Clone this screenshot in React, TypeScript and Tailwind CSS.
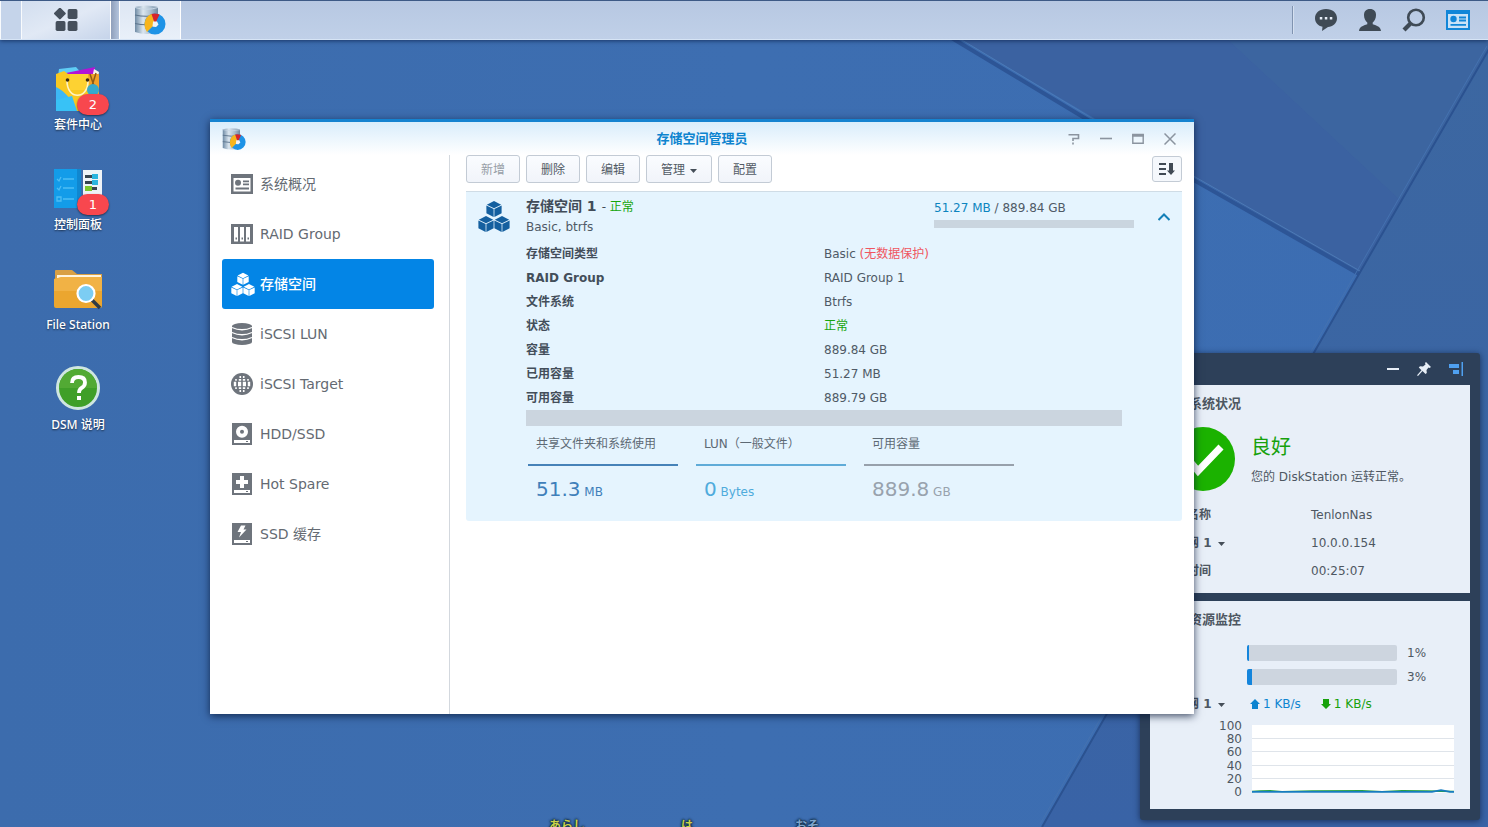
import type { ReactNode } from "react";

const FONT = "font-['DejaVu_Sans','Noto_Sans_CJK_SC',sans-serif]";

function Wallpaper() {
  return (
    <svg className="absolute inset-0 h-full w-full" viewBox="0 0 1488 827" preserveAspectRatio="xMaxYMin slice" aria-hidden="true">
      <defs>
        <linearGradient id="sky" x1="0" y1="0" x2="1" y2="0">
          <stop offset="0" stopColor="#3c6cad" />
          <stop offset="0.5" stopColor="#3d6eb1" />
          <stop offset="1" stopColor="#3c6db2" />
        </linearGradient>
        <linearGradient id="skyShade" x1="0" y1="0" x2="0" y2="1">
          <stop offset="0" stopColor="#3c67a1" />
          <stop offset="1" stopColor="#3963a6" />
        </linearGradient>
      </defs>
      <rect width="1488" height="827" fill="url(#sky)" />
      <path d="M885 -5 L1359 274 L1488 50 V-5 Z" fill="#3b62a1" />
      <path d="M1180 -5 L1490 -5 V50 L1400 200 Z" fill="#3d679f" opacity="0.7" />
      <path d="M1488 50 L1359 274 L1042 827 H1488 Z" fill="url(#skyShade)" />
      <path d="M885 -3 L955 40 L1088 120 L1359 274" fill="none" stroke="#2d5596" strokeWidth="4" />
      <path d="M887 -6 L957 37 L1090 117 L1360 271" fill="none" stroke="#4c7ab6" strokeWidth="1" />
      <path d="M1489 49 L1359 274 L1042 827" fill="none" stroke="#2b5290" strokeWidth="2" />
      <path d="M1487 46 L1357 271 L1040 824" fill="none" stroke="#4572b0" strokeWidth="1" />
    </svg>
  );
}

function StorageLogo({ className }: { className: string }) {
  return (
    <svg className={className} viewBox="0 0 32 32" aria-hidden="true">
      <defs>
        <linearGradient id="steel" x1="0" x2="1">
          <stop offset="0" stopColor="#6f8ba5" />
          <stop offset="0.35" stopColor="#dbe6ef" />
          <stop offset="0.7" stopColor="#a9bccd" />
          <stop offset="1" stopColor="#6f879e" />
        </linearGradient>
      </defs>
      <path d="M1 3 Q12.5 0 24 3 V28 Q12.5 32 1 28 Z" fill="url(#steel)" />
      <path d="M1 3.5 Q12.5 7 24 3.5" fill="none" stroke="#c9d8e6" />
      <path d="M1 11 Q12.5 13.5 24 11 M1 19.5 Q12.5 22 24 19.5" fill="none" stroke="#5c748c" strokeWidth="1.2" />
      <circle cx="21" cy="20" r="6.8" fill="none" stroke="#1e93e6" strokeWidth="7.4" />
      <path d="M21 20 L13 28 Q9 22 11.500 15.500 Q14 10.500 18 10 Z" fill="#f8b51c" />
      <path d="M21 20 L17.500 10 Q21 9 25.500 10.500 Z" fill="#d8232a" />
      <path d="M19 17.500 L23 17.500 L24.500 20.500 L22 23 L18.500 22.500 Z" fill="#eef3f8" />
    </svg>
  );
}

function Cube({ x, y }: { x: number; y: number }) {
  return (
    <g transform={`translate(${x} ${y})`}>
      <path d="M0 -7.9 L7.2 -4.3 L0 -0.8 L-7.2 -4.3 Z" />
      <path d="M-7.6 -3.5 L-0.4 0 V7.9 L-7.6 4.3 Z" />
      <path d="M7.6 -3.5 L0.4 0 V7.9 L7.6 4.3 Z" />
    </g>
  );
}

function Cubes({ className }: { className: string }) {
  return (
    <svg className={className} viewBox="0 0 32 32" fill="currentColor" aria-hidden="true">
      <Cube x={16} y={9} />
      <Cube x={8} y={24} />
      <Cube x={24} y={24} />
    </svg>
  );
}

function CardIcon({ className }: { className: string }) {
  return (
    <svg className={className} viewBox="0 0 22 22" aria-hidden="true">
      <path fill="currentColor" fillRule="evenodd" d="M0 1 H22 V21 H0 Z M2.5 5 V18.5 H19.5 V5 Z" />
      <circle cx="7" cy="9.8" r="3" fill="currentColor" />
      <path d="M12 8.300 H18 M12 11.300 H18 M4.500 15.500 H18" stroke="currentColor" strokeWidth="1.8" />
    </svg>
  );
}

function DiskShell({ children }: { children: ReactNode }) {
  return (
    <svg className="size-[22px] shrink-0" viewBox="0 0 22 22" aria-hidden="true">
      <path d="M1 0 H21 V22 H1 Z" fill="currentColor" />
      <path d="M3 17 H19 V20 H3 Z" fill="#fff" />
      <path d="M15 18 H17 V19 H15 Z" fill="currentColor" />
      {children}
    </svg>
  );
}

const navItems: { label: string; icon: ReactNode; active?: boolean }[] = [
  { label: "系统概况", icon: <CardIcon className="size-[22px] shrink-0" /> },
  {
    label: "RAID Group",
    icon: (
      <svg className="size-[22px] shrink-0" viewBox="0 0 22 22" aria-hidden="true">
        <path fill="currentColor" d="M0 1 H22 V21 H0 Z" />
        <path fill="#fff" d="M3 4 H7 V18.5 H3 Z M9 4 H13 V18.5 H9 Z M15 4 H19 V18.5 H15 Z" />
        <path fill="currentColor" d="M4.5 14.5 H6 V16.5 H4.5 Z M10.5 14.5 H12 V16.5 H10.5 Z M16.5 14.5 H18 V16.5 H16.5 Z" />
      </svg>
    ),
  },
  { label: "存储空间", icon: <Cubes className="-mr-0.5 size-6 shrink-0" />, active: true },
  {
    label: "iSCSI LUN",
    icon: (
      <svg className="size-[22px] shrink-0" viewBox="0 0 22 22" aria-hidden="true">
        <path fill="currentColor" d="M1 3 A10 3 0 0 1 21 3 V19 A10 3 0 0 1 1 19 Z" />
        <path fill="none" stroke="#fff" strokeWidth="1.3" d="M1 4.5 Q11 9 21 4.5 M1 9.5 Q11 14 21 9.5 M1 14.5 Q11 19 21 14.5" />
      </svg>
    ),
  },
  {
    label: "iSCSI Target",
    icon: (
      <svg className="size-[22px] shrink-0" viewBox="0 0 22 22" aria-hidden="true">
        <circle cx="11" cy="11" r="11" fill="currentColor" />
        <g fill="none" stroke="#fff">
          <path d="M2.8 11 H5.2 M7 11 H10.2 M11.800 11 H15 M16.800 11 H19.2" strokeWidth="4.4" />
          <path d="M4.200 6.800 H5.800 M7.800 6.800 H10.200 M11.800 6.800 H14.200 M16.200 6.800 H17.800 M4.200 15.200 H5.800 M7.800 15.200 H10.200 M11.800 15.200 H14.200 M16.200 15.200 H17.800" strokeWidth="1.8" />
          <path d="M9.300 3 V5 M12.700 3 V5 M9.300 17 V19 M12.700 17 V19" strokeWidth="1.6" />
        </g>
      </svg>
    ),
  },
  {
    label: "HDD/SSD",
    icon: (
      <DiskShell>
        <circle cx="11" cy="8.800" r="4" fill="none" stroke="#fff" strokeWidth="4" />
      </DiskShell>
    ),
  },
  {
    label: "Hot Spare",
    icon: (
      <DiskShell>
        <path d="M9 3 H13 V7 H17 V11 H13 V15 H9 V11 H5 V7 H9 Z" fill="#fff" />
      </DiskShell>
    ),
  },
  {
    label: "SSD 缓存",
    icon: (
      <DiskShell>
        <path d="M10 2.500 H14.500 L12.500 6.500 H15.500 L8 14.500 L10 9 H6.500 Z" fill="#fff" />
      </DiskShell>
    ),
  },
];

const details: { name: string; value: ReactNode }[] = [
  { name: "存储空间类型", value: <>Basic <span className="text-[#f05560]">(无数据保护)</span></> },
  { name: "RAID Group", value: "RAID Group 1" },
  { name: "文件系统", value: "Btrfs" },
  { name: "状态", value: <span className="text-[#17a50c]">正常</span> },
  { name: "容量", value: "889.84 GB" },
  { name: "已用容量", value: "51.27 MB" },
  { name: "可用容量", value: "889.79 GB" },
];

const usage = [
  { name: "共享文件夹和系统使用", amount: "51.3", unit: "MB", line: "border-[#4682b8]", text: "text-[#3f7fba]" },
  { name: "LUN（一般文件）", amount: "0", unit: "Bytes", line: "border-[#5fabd8]", text: "text-[#4fabdc]" },
  { name: "可用容量", amount: "889.8", unit: "GB", line: "border-[#97a0ab]", text: "text-[#98a2ad]" },
];

function Caret() {
  return (
    <svg className="mt-0.5 h-[4px] w-[7px]" viewBox="0 0 7 4" aria-hidden="true">
      <path d="M0 0 H7 L3.500 4 Z" fill="#454e58" />
    </svg>
  );
}

function ToolButton({ children, muted }: { children: ReactNode; muted?: boolean }) {
  return (
    <button
      type="button"
      disabled={muted}
      className="flex h-7 items-center gap-[5px] rounded-[3px] border border-[#c3cbd5] bg-linear-to-b from-[#fafcff] to-[#f1f4fa] px-3.5 pt-0.5 text-xs text-[#525b65] disabled:text-[#979ea7]"
    >
      {children}
    </button>
  );
}

function DesktopItem({ label, badge, children }: { label: string; badge?: string; children: ReactNode }) {
  return (
    <button type="button" className="relative flex w-24 flex-col items-center gap-[5px]">
      <svg className="size-12" viewBox="0 0 48 48" aria-hidden="true">
        {children}
      </svg>
      {badge && (
        <span className="absolute top-[30px] right-[17px] flex h-[21px] w-8 items-center justify-center rounded-full bg-[#f8474e] text-[13px] text-white shadow-[0_1px_2px_rgba(0,0,0,0.5)]">
          {badge}
        </span>
      )}
      <span className="font-['Noto_Sans','Noto_Sans_CJK_SC',sans-serif] text-xs leading-4 font-medium whitespace-nowrap text-white [text-shadow:0_1px_2px_rgba(0,0,0,0.6)]">
        {label}
      </span>
    </button>
  );
}

function Desktop() {
  return (
    <nav aria-label="桌面" className="relative flex w-fit flex-col gap-[31px] pt-6 pl-[30px]">
      <DesktopItem label="套件中心" badge="2">
        <path d="M5 5 L22 3 L30 12 H4 Z" fill="#5fcdf5" />
        <path d="M12 9 L41 3 L39 13 H12 Z" fill="#b314d6" />
        <path d="M40 5 L45 8 L44 14 H38 Z" fill="#f6f4ea" />
        <path d="M2 10 L10 7 L14 10 H45 V47 H2 Z" fill="#f9c921" />
        <path d="M16 10 H34 V26 H16 Z" fill="#ffd93d" opacity="0.6" />
        <path d="M34 10 H45 V47 H38 Z" fill="#f1a22a" />
        <path d="M2 23 C12 28 18 36 22 47 H2 Z" fill="#3db8f5" />
        <path d="M2 36 L18 32 L23 47 H2 Z" fill="#38c2f6" />
        <path d="M13 17 C13 36 34 36 34 17" fill="none" stroke="#fff3c4" strokeWidth="1.600" />
        <circle cx="13.500" cy="16" r="1.800" fill="#3b2b12" />
        <circle cx="33.500" cy="16" r="1.800" fill="#3b2b12" />
        <path d="M36 10 L40 22 M42 9 L38 22" stroke="#8d5c16" strokeWidth="1.500" />
        <circle cx="39" cy="26" r="6" fill="#35aacd" />
      </DesktopItem>
      <DesktopItem label="控制面板" badge="1">
        <path d="M29 6 H48 V46 H29 Z" fill="#eef3f7" />
        <path d="M0 5 H27 V44 H0 Z" fill="#139ce9" />
        <path d="M23 5 H27 V44 H23 Z" fill="#1087d0" />
        <g stroke="#4fbdf3" strokeWidth="1.300" fill="none">
          <path d="M3 15 L5 17 L7 13 M9 15 H20 M3 24 L5 26 L7 22 M9 24 H20 M9 35 H20" />
          <path d="M3 33 H7 V37 H3 Z" />
        </g>
        <path d="M31 11 H43 V14 H31 Z M31 17 H43 V20 H31 Z M31 23 H43 V26 H31 Z" fill="#36444f" />
        <path d="M38 10 H44 V15 H38 Z M38 16 H44 V21 H38 Z" fill="#2bb5df" />
        <path d="M31 22 H38 V27 H31 Z" fill="#7bc62d" />
      </DesktopItem>
      <DesktopItem label="File Station">
        <path d="M1 7 Q1 6 2 6 H18 L23 10 H48 V18 H1 Z" fill="#d9a044" />
        <path d="M3 11 H47 V18 H3 Z" fill="#fff5df" />
        <path d="M0 15 L8 13 H48 V42 Q48 44 46 44 H2 Q0 44 0 42 Z" fill="#eba62f" />
        <path d="M0 15 L8 13 H48 V27 H0 Z" fill="#f1b245" />
        <path d="M38 36 L46 44" stroke="#2f3b46" strokeWidth="3.500" />
        <circle cx="32" cy="29.500" r="8.500" fill="#7ccdf3" stroke="#fff" strokeWidth="2.200" />
      </DesktopItem>
      <DesktopItem label="DSM 说明">
        <circle cx="24" cy="24" r="20.500" fill="#3f9f28" stroke="#cfe6e0" strokeWidth="3" />
        <path d="M5 24 A19 19 0 0 1 43 24 Z" fill="#52aa34" />
        <path d="M18 19 Q18 13 24.500 13 Q31 13 31 18.500 Q31 22 27.500 24 Q25 25.500 25 29" fill="none" stroke="#fff" strokeWidth="3.800" />
        <path d="M23 32 H27 V36 H23 Z" fill="#fff" />
      </DesktopItem>
    </nav>
  );
}

function Taskbar() {
  return (
    <header className="relative flex h-10 items-stretch justify-between border-t border-b border-t-[#3d5a86] border-b-[#d6e4f5] bg-linear-to-b from-[#b7c8e2] to-[#c0d0e8] shadow-[0_1px_4px_rgba(10,30,70,0.7)]">
      <div className="flex">
        <span className="w-[22px] border-r border-l border-white/90 bg-[#c5d4ea]" />
        <button type="button" aria-label="主菜单" className="flex w-[89px] items-center justify-center border-r border-white bg-linear-to-br from-[#d2deef] via-[#e1e9f5] to-[#c6d4ea] text-[#454f5b]">
          <svg className="size-6" viewBox="0 0 22 22" fill="currentColor" aria-hidden="true">
            <rect x="1.300" y="1" width="8.200" height="8.200" rx="1" transform="rotate(45 5.400 5.100)" />
            <rect x="12.500" y="1" width="9" height="9" rx="1.500" />
            <rect x="1.500" y="12" width="9" height="9" rx="1.500" />
            <rect x="12.500" y="12" width="9" height="9" rx="1.500" />
          </svg>
        </button>
        <span className="w-2 bg-linear-to-r from-[#8f9fba] to-[#b3c4dd]" />
        <button type="button" aria-label="存储空间管理员" className="flex w-[62px] items-center justify-center border border-y-0 border-white bg-linear-to-b from-[#dde6f3] to-[#e9f0f9]">
          <StorageLogo className="size-8" />
        </button>
      </div>
      <div className="flex items-center gap-5 pr-[18px] text-[#3f4a55]">
        <span className="h-7 w-0.5 border-r border-l border-l-[#8093b0] border-r-[#d5e0f0]" />
        <button type="button" aria-label="通知">
          <svg className="size-6" viewBox="0 0 24 24" aria-hidden="true">
            <path d="M12 1 C18.500 1 23 4.800 23 10.200 C23 15.500 18.500 18.500 14 19 L8 23 L8.500 18.800 C4 17.800 1 14.500 1 10.200 C1 4.800 5.500 1 12 1 Z" fill="currentColor" />
            <path d="M5.800 9 H8.300 V11.500 H5.800 Z M10.800 9 H13.300 V11.500 H10.800 Z M15.800 9 H18.300 V11.500 H15.800 Z" fill="#e8eef8" />
          </svg>
        </button>
        <button type="button" aria-label="用户">
          <svg className="size-6" viewBox="0 0 24 24" fill="currentColor" aria-hidden="true">
            <path d="M12 1 C16 1 18 3.500 18 7 C18 10.500 16.500 13 14.700 14.500 V16.300 C19 18 22.500 18.300 23 23 H1 C1.500 18.300 5 18 9.300 16.300 V14.500 C7.500 13 6 10.500 6 7 C6 3.500 8 1 12 1 Z" />
          </svg>
        </button>
        <button type="button" aria-label="搜索">
          <svg className="size-6" viewBox="0 0 24 24" fill="none" stroke="currentColor" aria-hidden="true">
            <circle cx="14" cy="9.500" r="7.800" strokeWidth="2.600" />
            <path d="M8.500 15.500 L2 22" strokeWidth="4.200" />
          </svg>
        </button>
        <button type="button" aria-label="小工具" className="text-[#1186d8]">
          <svg className="size-6" viewBox="0 0 24 24" aria-hidden="true">
            <path d="M0 2 H24 V22 H0 Z" fill="currentColor" />
            <path d="M2 6 H22 V20 H2 Z" fill="#c9e2f7" />
            <circle cx="7.500" cy="11" r="3.200" fill="currentColor" />
            <path d="M13 9.500 H20 M13 12.500 H20 M4.500 16.800 H20" stroke="currentColor" strokeWidth="1.800" />
          </svg>
        </button>
      </div>
    </header>
  );
}

function StorageWindow() {
  return (
    <section aria-label="存储空间管理员" className="absolute top-[119px] left-[210px] flex h-[595px] w-[984px] flex-col border-t-[3px] border-[#1583d0] bg-white shadow-[0_2px_8px_rgba(5,20,50,0.75)]">
      <header className="flex h-[33px] shrink-0 items-center justify-between bg-linear-to-b from-[#d9edfb] to-white px-3">
        <div className="flex-1">
          <StorageLogo className="size-6" />
        </div>
        <h1 className="text-[13px] leading-5 font-bold text-[#0d84cf]">存储空间管理员</h1>
        <div className="flex flex-1 justify-end">
          <div className="flex gap-5 pr-1.5 text-[#8b949f]">
            <button type="button" aria-label="帮助">
              <svg className="size-3" viewBox="0 0 12 12" fill="none" stroke="currentColor" strokeWidth="1.600" aria-hidden="true">
                <path d="M0.500 1.800 H10.500 V5.500 H5 V8 M5 9.500 V11.500" />
              </svg>
            </button>
            <button type="button" aria-label="最小化">
              <svg className="size-3" viewBox="0 0 12 12" stroke="currentColor" strokeWidth="1.600" aria-hidden="true">
                <path d="M0 5.500 H12" />
              </svg>
            </button>
            <button type="button" aria-label="最大化">
              <svg className="size-3" viewBox="0 0 12 12" fill="none" stroke="currentColor" aria-hidden="true">
                <path d="M0.800 1.500 H11.200 V10.300 H0.800 Z" strokeWidth="1.400" />
                <path d="M0 2.500 H12" strokeWidth="2.500" />
              </svg>
            </button>
            <button type="button" aria-label="关闭">
              <svg className="size-3" viewBox="0 0 12 12" stroke="currentColor" strokeWidth="1.500" aria-hidden="true">
                <path d="M0.500 0.500 L11.500 11.500 M11.500 0.500 L0.500 11.500" />
              </svg>
            </button>
          </div>
        </div>
      </header>
      <div className="flex min-h-0 flex-1">
        <nav aria-label="功能" className="w-60 shrink-0 border-r border-[#d3d8de] pt-1 pr-[15px] pl-3">
          <ul>
            {navItems.map((item) => (
              <li key={item.label}>
                <a
                  href="#"
                  className={
                    item.active
                      ? "flex h-[50px] items-center gap-[7px] rounded-[3px] bg-[#0385e6] pl-[9px] text-sm font-medium text-white"
                      : "flex h-[50px] items-center gap-[7px] rounded-[3px] pl-[9px] text-sm text-[#6e747c]"
                  }
                >
                  {item.icon}
                  <span className={item.active ? "" : "text-[#646a72]"}>{item.label}</span>
                </a>
              </li>
            ))}
          </ul>
        </nav>
        <main className="flex min-w-0 flex-1 flex-col pr-3 pl-4">
          <div className="flex items-center justify-between">
            <div className="flex gap-1.5">
              <ToolButton muted>新增</ToolButton>
              <ToolButton>删除</ToolButton>
              <ToolButton>编辑</ToolButton>
              <ToolButton>
                管理 <Caret />
              </ToolButton>
              <ToolButton>配置</ToolButton>
            </div>
            <button type="button" aria-label="排序" className="flex h-[26px] w-[30px] items-center justify-center rounded-[3px] border border-[#c3cbd5] bg-[#f5f8fc] text-[#414a54]">
              <svg className="h-3 w-4" viewBox="0 0 16 12" aria-hidden="true">
                <path d="M0 1 H7 M0 6 H7 M0 11 H7" stroke="currentColor" strokeWidth="1.800" />
                <path d="M10 0 H14 V7.500 H16 L12 12 L8 7.500 H10 Z" fill="currentColor" />
              </svg>
            </button>
          </div>
          <article className="mt-2 h-[330px] rounded-b-[3px] border-t border-[#cfdce6] bg-[#e5f4fe] text-xs text-[#4f5a66]">
            <header className="flex h-[50px] pl-3">
              <Cubes className="mt-2 size-8 text-[#145f9f]" />
              <div className="min-w-0 flex-1 pt-[3px] pl-4">
                <h2 className="flex items-baseline text-sm leading-[22px] font-bold text-[#414c58]">
                  存储空间 1<span className="ml-[5px] text-xs font-normal">- <span className="text-[#17a50c]">正常</span></span>
                </h2>
                <p className="leading-[21px]">Basic, btrfs</p>
              </div>
              <div className="w-[200px] pt-1.5">
                <p className="leading-5">
                  <span className="text-[#0d84bf]">51.27 MB</span> / 889.84 GB
                </p>
                <div className="mt-0.5 h-2 bg-[#cad5df]" />
              </div>
              <button type="button" aria-label="收起" className="flex w-12 items-center justify-center pl-3 text-[#1480b8]">
                <svg className="h-2 w-3" viewBox="0 0 12 8" fill="none" stroke="currentColor" strokeWidth="2" aria-hidden="true">
                  <path d="M0.500 7 L6 1.500 L11.500 7" />
                </svg>
              </button>
            </header>
            <div className="px-[60px]">
              <table className="w-full table-fixed text-left">
                <tbody>
                  {details.map((row) => (
                    <tr key={row.name} className="h-6">
                      <th scope="row" className="p-0 leading-6 font-bold text-[#434e5a]">{row.name}</th>
                      <td className="p-0 leading-6">{row.value}</td>
                    </tr>
                  ))}
                </tbody>
              </table>
              <div className="h-4 bg-[#cbd5df]" />
              <ul className="flex gap-[18px] pl-0.5">
                {usage.map((u) => (
                  <li key={u.amount} className="w-[150px]">
                    <p className={`${u.line} h-10 border-b-2 pl-2 leading-9 whitespace-nowrap text-[#5d6974]`}>{u.name}</p>
                    <p className={`${u.text} pl-2 leading-[46px]`}>
                      <span className="text-xl leading-[46px]">{u.amount}</span> {u.unit}
                    </p>
                  </li>
                ))}
              </ul>
            </div>
          </article>
        </main>
      </div>
    </section>
  );
}

function Meter({ label, value }: { label: string; value: number }) {
  return (
    <div className="flex h-6 items-center">
      <span className="w-[84px] font-bold">{label}</span>
      <div className="h-4 w-[150px] overflow-hidden rounded-[2px] bg-[#cdd5df]" role="meter" aria-label={label} aria-valuenow={value}>
        <div className="h-full bg-[#1485dc]" style={{ width: `${value + 0.5}%` }} />
      </div>
      <span className="pl-2.5">{value}%</span>
    </div>
  );
}

function Rate({ up }: { up?: boolean }) {
  return (
    <span className={up ? "flex items-center gap-[3px] text-[#0d84d0]" : "flex items-center gap-[3px] text-[#17a10c]"}>
      <svg className="size-2.5" viewBox="0 0 10 10" fill="currentColor" aria-hidden="true">
        {up ? <path d="M5 0 L10 5 H8 V10 H2 V5 H0 Z" /> : <path d="M5 10 L10 5 H8 V0 H2 V5 H0 Z" />}
      </svg>
      1 KB/s
    </span>
  );
}

function Widgets() {
  return (
    <aside className="absolute right-2 bottom-[7px] w-[340px] rounded-[3px] bg-[#2d4059] px-2.5 pb-[11px] text-xs text-[#4e5762] shadow-[0_1px_6px_rgba(10,25,55,0.7)]">
      <div className="flex h-8 items-center justify-end gap-[18px] pr-[7px] text-[#e7eef6]">
        <button type="button" aria-label="最小化">
          <svg className="h-3.5 w-3" viewBox="0 0 12 14" aria-hidden="true">
            <path d="M0 7 H12" stroke="currentColor" strokeWidth="2" />
          </svg>
        </button>
        <button type="button" aria-label="固定">
          <svg className="size-3.5" viewBox="0 0 14 14" fill="currentColor" aria-hidden="true">
            <path d="M9 0 L14 5 L12.500 6 L11.500 5.500 L9.500 8 L9.800 11 L8.500 12 L5.500 9 L1 14 L0 13.200 L4.500 8.200 L1.800 5.500 L3 4.300 L6 4.500 L8.500 2.500 L8 1 Z" />
          </svg>
        </button>
        <button type="button" aria-label="停靠" className="text-[#4fa0f0]">
          <svg className="size-3.5" viewBox="0 0 14 14" fill="currentColor" aria-hidden="true">
            <path d="M0 2 H10 V6 H0 Z M4 8 H10 V12 H4 Z M12.500 0 H14 V14 H12.500 Z" />
          </svg>
        </button>
      </div>
      <section className="h-[208px] bg-[#e8eff8] pl-[13px]">
        <h2 className="pl-[26px] text-[13px] leading-[38px] font-bold">系统状况</h2>
        <div className="flex gap-4 pt-1 pl-2">
          <svg className="size-16" viewBox="0 0 64 64" aria-hidden="true">
            <circle cx="32" cy="32" r="32" fill="#1bb200" />
            <path d="M16 31 L27 44 L50 20" fill="none" stroke="#fff" strokeWidth="7" />
          </svg>
          <div>
            <p className="pt-1 text-xl leading-8 text-[#17a10c]">良好</p>
            <p className="pt-0.5 leading-6">您的 DiskStation 运转正常。</p>
          </div>
        </div>
        <table className="mt-2.5 w-full table-fixed text-left">
          <tbody>
            <tr className="h-7">
              <th scope="row" className="w-[148px] p-0 font-bold">设备名称</th>
              <td className="p-0">TenlonNas</td>
            </tr>
            <tr className="h-7">
              <th scope="row" className="p-0 font-bold">
                <button type="button" className="flex items-center gap-1.5">局域网 1 <Caret /></button>
              </th>
              <td className="p-0">10.0.0.154</td>
            </tr>
            <tr className="h-7">
              <th scope="row" className="p-0 font-bold">运行时间</th>
              <td className="p-0">00:25:07</td>
            </tr>
          </tbody>
        </table>
      </section>
      <section className="mt-2 h-[208px] bg-[#e8eff8] pl-[13px]">
        <h2 className="pl-[26px] text-[13px] leading-[38px] font-bold">资源监控</h2>
        <div className="pt-0.5">
          <Meter label="CPU" value={1} />
          <Meter label="RAM" value={3} />
        </div>
        <div className="flex h-[30px] items-center">
          <button type="button" className="flex w-[87px] items-center gap-1.5 font-bold">局域网 1 <Caret /></button>
          <div className="flex gap-5">
            <Rate up />
            <Rate />
          </div>
        </div>
        <div className="flex h-20 gap-2.5">
          <div className="flex w-[79px] flex-col justify-between pt-px text-right leading-[13px]">
            {[100, 80, 60, 40, 20, 0].map((n) => (
              <span key={n}>{n}</span>
            ))}
          </div>
          <svg className="mt-1.5 h-[68px] w-[202px]" viewBox="0 0 202 68" aria-hidden="true">
            <path d="M0 0 H202 V68 H0 Z" fill="#fff" />
            <path d="M0 13.500 H202 M0 26.500 H202 M0 40.500 H202 M0 53.500 H202" stroke="#dfe4ea" />
            <path d="M0 66.500 L8 66 L18 65.600 L30 66.600 L60 66 L110 65.800 L130 66.600 L150 65.800 L175 66 L202 66.500" fill="none" stroke="#27a044" strokeWidth="1.400" />
            <path d="M0 66.800 H180 L189 65.200 L198 66.800 H202" fill="none" stroke="#177cc0" strokeWidth="1.800" />
          </svg>
        </div>
      </section>
    </aside>
  );
}

export default function App() {
  return (
    <div className={`${FONT} relative h-screen overflow-hidden bg-[#3d6eb0]`} lang="zh-CN">
      <Wallpaper />
      <Taskbar />
      <Desktop />
      <Widgets />
      <StorageWindow />
      <div lang="ja" className="absolute bottom-0 left-[549px] flex h-2.5 font-['Noto_Sans_CJK_JP',sans-serif] text-xs leading-4 font-bold text-[#c9d24a] [text-shadow:0_0_2px_#0a2438,0_0_2px_#0a2438,0_0_3px_#0a2438]">
        <span className="w-[132px]">あらし</span>
        <span className="w-[114px]">は</span>
        <span className="text-[#7fa5cc]">おそ</span>
      </div>
    </div>
  );
}
